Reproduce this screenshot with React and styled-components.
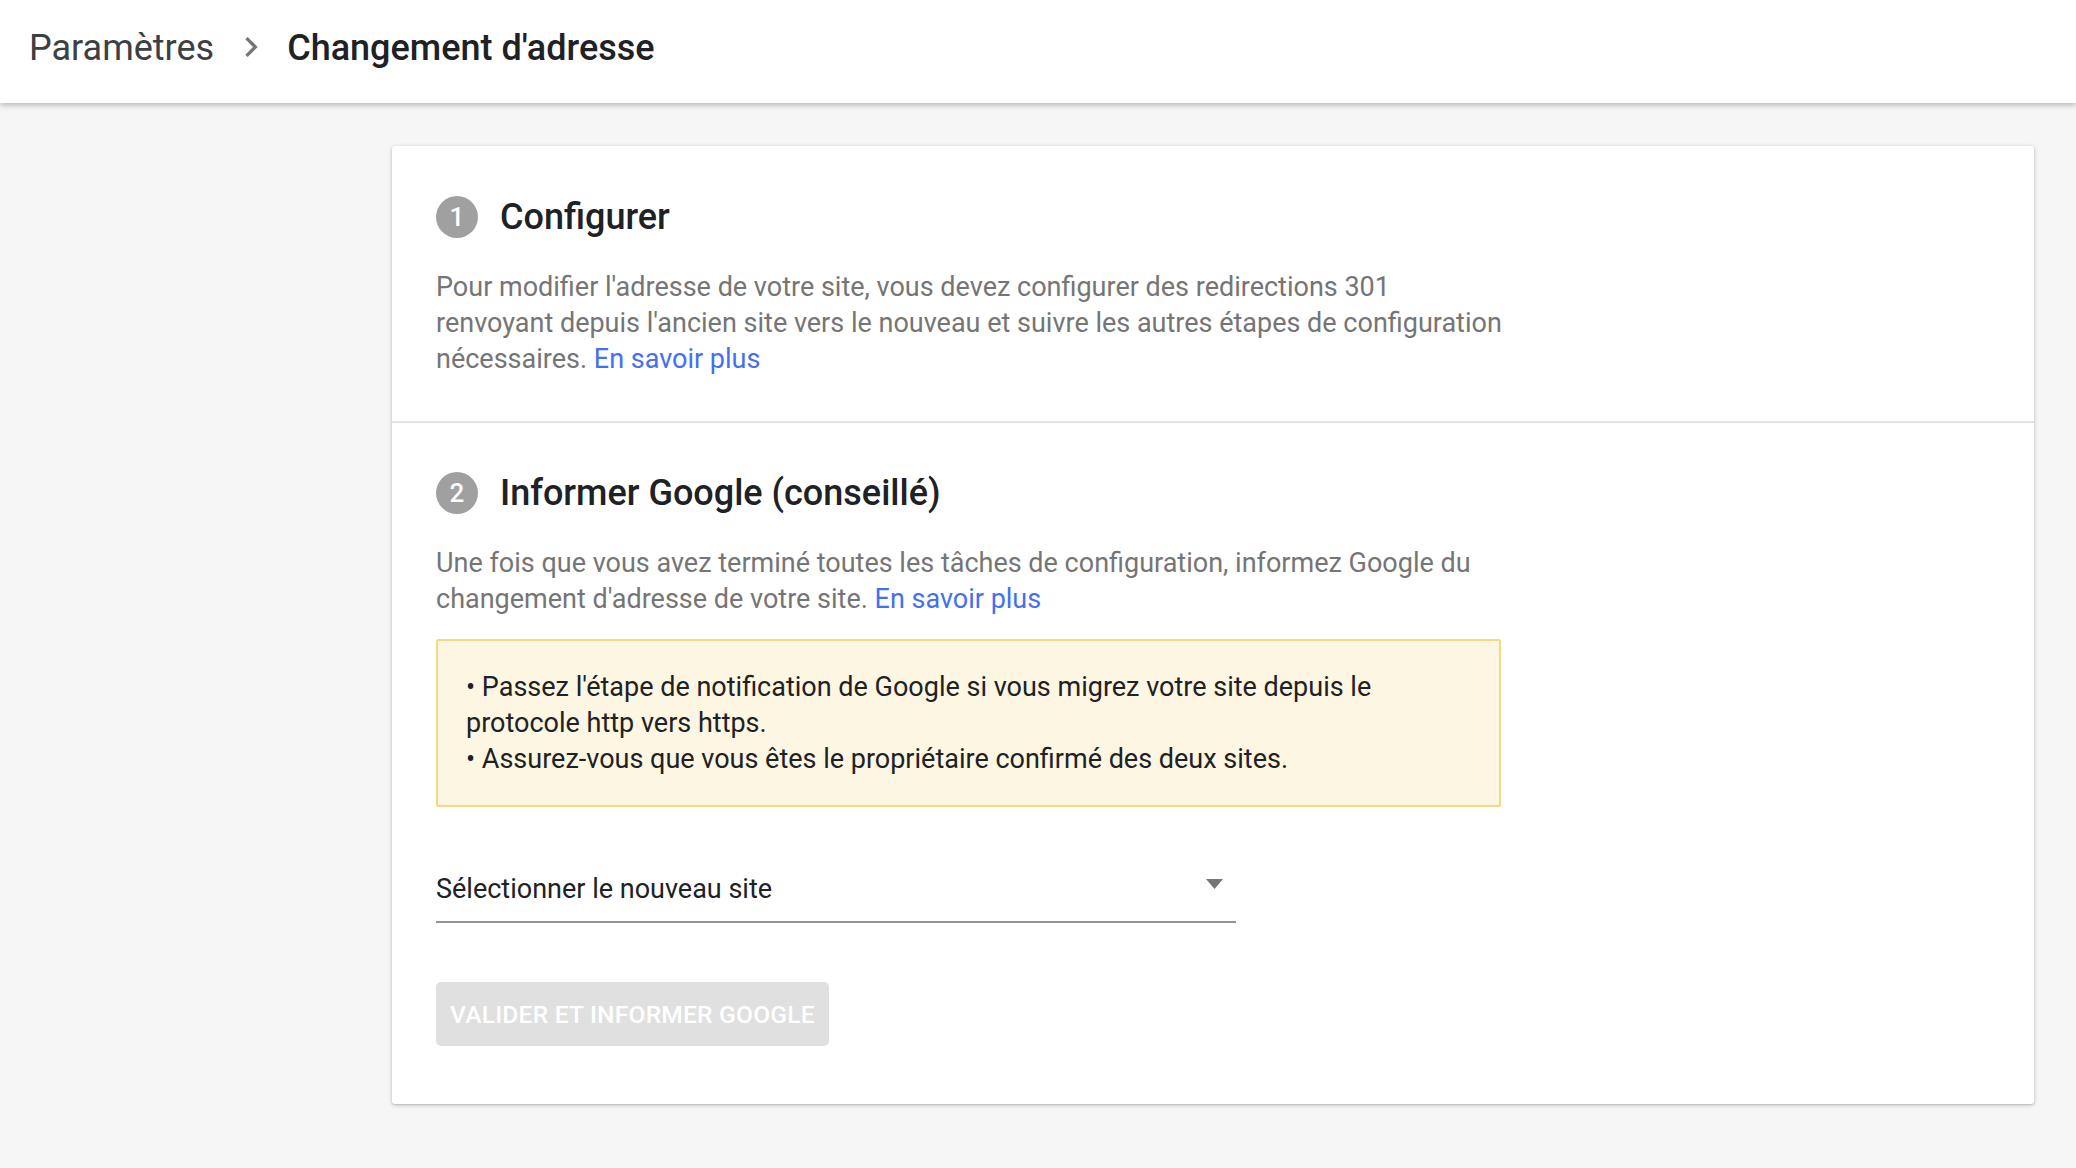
import styled, { createGlobalStyle } from 'styled-components'

const GlobalStyle = createGlobalStyle`
  html, body {
    margin: 0;
    padding: 0;
    background: #f6f6f6;
    font-family: Roboto, "Noto Sans", "Liberation Sans", sans-serif;
  }
  * { box-sizing: border-box; }
`

const Page = styled.div`
  min-height: 1168px;
  background: #f6f6f6;
`

const Header = styled.header`
  height: 103px;
  background: #fff;
  display: flex;
  align-items: center;
  padding: 0 29px;
  box-shadow: 0 2px 6px rgba(0, 0, 0, 0.28);
  position: relative;
  z-index: 1;
`

const Crumb = styled.span`
  font-size: 36px;
  font-weight: ${(p) => (p.$current ? 500 : 400)};
  color: ${(p) => (p.$current ? '#202124' : '#3c4043')};
  line-height: 1;
  padding-bottom: 8px;
`

const Chevron = styled.svg`
  width: 40px;
  height: 40px;
  flex-shrink: 0;
  margin: 0 16px 10px 17px;
  fill: #757575;
`

const Main = styled.main`
  padding: 43px 42px 40px 392px;
`

const Card = styled.div`
  background: #fff;
  border-radius: 3px;
  box-shadow: 0 1px 4px rgba(0, 0, 0, 0.22), 0 1px 2px rgba(0, 0, 0, 0.1);
`

const Section = styled.section`
  padding: ${(p) => (p.$last ? '46px 44px 58px' : '47px 44px 44px')};
  & + & {
    border-top: 2px solid #e4e4e4;
  }
`

const StepHead = styled.div`
  display: flex;
  align-items: center;
  height: 48px;
  margin-bottom: 28px;
`

const StepNum = styled.span`
  width: 42px;
  height: 42px;
  border-radius: 50%;
  background: #a0a0a0;
  color: #fff;
  font-size: 26px;
  font-weight: 500;
  display: flex;
  align-items: center;
  justify-content: center;
  margin-right: 22px;
  flex-shrink: 0;
`

const StepTitle = styled.h2`
  margin: 0;
  font-size: 36px;
  font-weight: 500;
  color: #202124;
  line-height: 48px;
`

const Text = styled.p`
  margin: 0;
  max-width: 1068px;
  font-size: 27px;
  line-height: 36px;
  color: #757575;
`

const Link = styled.a`
  color: #4270f0;
  text-decoration: none;
`

const Notice = styled.div`
  margin-top: 22px;
  width: 1065px;
  background: #fdf6e2;
  border: 2px solid #f5d886;
  border-radius: 2px;
  padding: 28px 28px;
  font-size: 27px;
  line-height: 36px;
  color: #202124;
`

const Select = styled.div`
  margin-top: 64px;
  width: 800px;
  display: flex;
  align-items: center;
  justify-content: space-between;
  padding: 0 0 14px;
  border-bottom: 2px solid #949494;
`

const SelectLabel = styled.span`
  font-size: 27px;
  line-height: 36px;
  color: #202124;
`

const Caret = styled.svg`
  width: 17px;
  height: 10px;
  margin: 0 13px 10px 0;
  fill: #757575;
`

const Button = styled.button`
  margin-top: 59px;
  display: block;
  height: 64px;
  padding: 0 14px;
  border: none;
  border-radius: 5px;
  background: #e0e0e0;
  color: #fff;
  font-family: inherit;
  font-size: 24.6px;
  font-weight: 500;
  text-transform: uppercase;
  letter-spacing: 0.2px;
`

export default function App() {
  return (
    <Page>
      <GlobalStyle />
      <Header>
        <Crumb>Paramètres</Crumb>
        <Chevron viewBox="0 0 24 24">
          <path d="M8.59 16.59 13.17 12 8.59 7.41 10 6l6 6-6 6z" />
        </Chevron>
        <Crumb $current>Changement d'adresse</Crumb>
      </Header>
      <Main>
        <Card>
          <Section>
            <StepHead>
              <StepNum>1</StepNum>
              <StepTitle>Configurer</StepTitle>
            </StepHead>
            <Text>
              Pour modifier l'adresse de votre site, vous devez configurer des
              redirections 301 renvoyant depuis l'ancien site vers le nouveau et
              suivre les autres étapes de configuration nécessaires.{' '}
              <Link href="#">En savoir plus</Link>
            </Text>
          </Section>
          <Section $last>
            <StepHead>
              <StepNum>2</StepNum>
              <StepTitle>Informer Google (conseillé)</StepTitle>
            </StepHead>
            <Text>
              Une fois que vous avez terminé toutes les tâches de configuration,
              informez Google du changement d'adresse de votre site.{' '}
              <Link href="#">En savoir plus</Link>
            </Text>
            <Notice>
              • Passez l'étape de notification de Google si vous migrez votre site
              depuis le protocole http vers https.
              <br />• Assurez-vous que vous êtes le propriétaire confirmé des deux
              sites.
            </Notice>
            <Select>
              <SelectLabel>Sélectionner le nouveau site</SelectLabel>
              <Caret viewBox="0 0 17 10">
                <path d="M0 0h17L8.5 10z" />
              </Caret>
            </Select>
            <Button disabled>Valider et informer Google</Button>
          </Section>
        </Card>
      </Main>
    </Page>
  )
}
